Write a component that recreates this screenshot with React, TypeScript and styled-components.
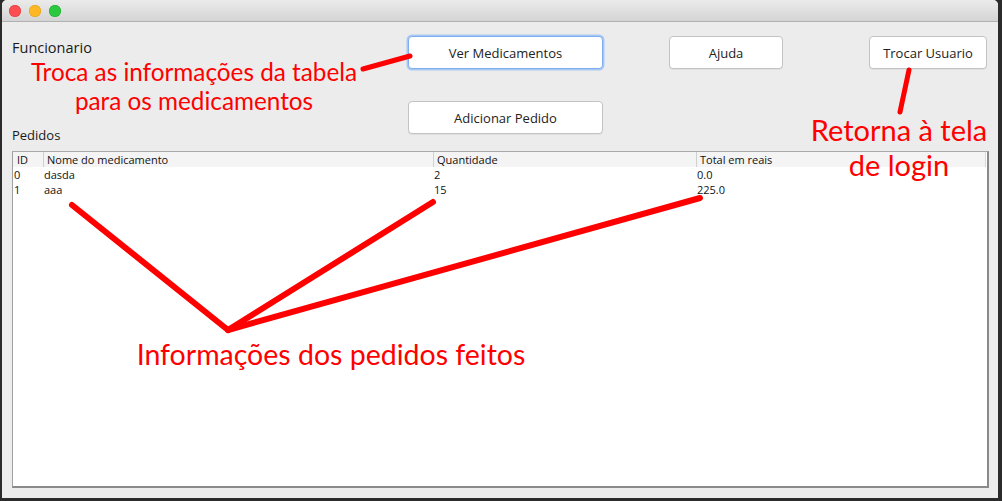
import React from "react";
import styled, { createGlobalStyle } from "styled-components";

const Global = createGlobalStyle`
  html, body { margin: 0; padding: 0; background: #2b2b2b; }
  body { font-family: "Open Sans", "Liberation Sans", sans-serif; }
`;

const Stage = styled.div`
  position: relative;
  width: 1002px;
  height: 501px;
  overflow: hidden;
  background: #2b2b2b;
  display: flex;
  padding-left: 2px;
  box-sizing: border-box;
`;

const Window = styled.div`
  width: 996px;
  height: 498px;
  background: #ececec;
  border-top-right-radius: 5px;
  border-top-left-radius: 5px;
  display: flex;
  flex-direction: column;
  overflow: hidden;
`;

const TitleBar = styled.div`
  height: 21px;
  flex: none;
  background: linear-gradient(#ebebeb, #d4d4d4);
  border-bottom: 1px solid #b1b1b1;
  display: flex;
  align-items: center;
  gap: 8px;
  padding-left: 7px;
`;

const Light = styled.span<{ $c: string; $b: string }>`
  width: 12px;
  height: 12px;
  border-radius: 50%;
  background: ${(p) => p.$c};
  box-shadow: inset 0 0 0 0.5px ${(p) => p.$b};
`;

const Content = styled.div`
  flex: 1;
  display: flex;
  flex-direction: column;
  padding: 14px 9px 10px 10px;
`;

const TopGrid = styled.div`
  display: grid;
  grid-template-columns: 396px 195px 66px 114px 86px 118px;
  grid-template-rows: 33px 32px 33px;
`;

const Label = styled.div<{ $size?: number }>`
  font-family: "Open Sans", "Liberation Sans", sans-serif;
  font-size: ${(p) => p.$size ?? 13}px;
  line-height: 17px;
  color: #1a1a1a;
`;

const TopLabel = styled(Label)`
  grid-column: 1;
  grid-row: 1;
  margin-top: 3px;
`;

const Button = styled.button<{ $col: number; $row: number; $focus?: boolean }>`
  grid-column: ${(p) => p.$col};
  grid-row: ${(p) => p.$row};
  margin: 0;
  padding: 0;
  background: #fff;
  border: 1px solid ${(p) => (p.$focus ? "#7eaef0" : "#c3c3c3")};
  box-shadow: ${(p) => (p.$focus ? "0 0 0 1.5px #a8c8f2" : "0 1px 0 rgba(0,0,0,0.05)")};
  border-radius: 4px;
  font-family: "Open Sans", "Liberation Sans", sans-serif;
  font-size: 13px;
  color: #222;
  cursor: default;
`;

const SectionLabel = styled(Label)`
  margin-top: -7px;
`;

const TableFrame = styled.div`
  margin-top: 7px;
  flex: 1;
  background: #fff;
  border-top: 1px solid #a9a9a9;
  border-left: 1px solid #a0a0a0;
  border-right: 2px solid #8a8a8a;
  border-bottom: 2px solid #8a8a8a;
  display: flex;
  flex-direction: column;
  font-family: "Open Sans", "Liberation Sans", sans-serif;
  font-size: 11px;
  color: #111;
`;

const COLS = "30px 390px 263px 1fr";

const HeaderRow = styled.div`
  display: grid;
  grid-template-columns: ${COLS};
  height: 15px;
  background: #f4f4f4;
  border-right: 1px solid #d8d8d8;
  margin-right: 1px;
`;

const HeaderCell = styled.div<{ $first?: boolean }>`
  padding-left: 3px;
  line-height: 15px;
  border-left: 1px solid ${(p) => (p.$first ? "transparent" : "#d0d0d0")};
  white-space: nowrap;
`;

const Row = styled.div`
  display: grid;
  grid-template-columns: ${COLS};
  height: 15px;
`;

const Cell = styled.div`
  padding-left: 1px;
  line-height: 15px;
  white-space: nowrap;
`;

const Overlay = styled.svg`
  position: absolute;
  inset: 0;
  pointer-events: none;
`;

const Note = styled.div<{ $cx: number; $y: number; $size: number; $lh: number }>`
  position: absolute;
  left: ${(p) => p.$cx}px;
  top: ${(p) => p.$y}px;
  transform: translateX(-50%);
  font-family: "Lato", "Liberation Sans", sans-serif;
  font-size: ${(p) => p.$size}px;
  line-height: ${(p) => p.$lh}px;
  color: #ff0000;
  text-align: center;
  white-space: nowrap;
`;

const rows = [
  ["0", "dasda", "2", "0.0"],
  ["1", "aaa", "15", "225.0"],
];

export default function App() {
  return (
    <Stage>
      <Global />
      <Window>
        <TitleBar>
          <Light $c="#fc4d50" $b="#df3d3f" />
          <Light $c="#fdb823" $b="#de9c19" />
          <Light $c="#2ac83e" $b="#1ea72e" />
        </TitleBar>
        <Content>
          <TopGrid>
            <TopLabel $size={14.5}>Funcionario</TopLabel>
            <Button $col={2} $row={1} $focus>
              Ver Medicamentos
            </Button>
            <Button $col={4} $row={1}>
              Ajuda
            </Button>
            <Button $col={6} $row={1}>
              Trocar Usuario
            </Button>
            <Button $col={2} $row={3}>
              Adicionar Pedido
            </Button>
          </TopGrid>
          <SectionLabel>Pedidos</SectionLabel>
          <TableFrame>
            <HeaderRow>
              <HeaderCell $first>ID</HeaderCell>
              <HeaderCell>Nome do medicamento</HeaderCell>
              <HeaderCell>Quantidade</HeaderCell>
              <HeaderCell>Total em reais</HeaderCell>
            </HeaderRow>
            {rows.map((r) => (
              <Row key={r[0]}>
                {r.map((c, i) => (
                  <Cell key={i}>{c}</Cell>
                ))}
              </Row>
            ))}
          </TableFrame>
        </Content>
      </Window>
      <Overlay width="1002" height="501" viewBox="0 0 1002 501">
        <g stroke="#ff0000" strokeLinecap="round" fill="none">
          <line x1="363" y1="69" x2="410" y2="56" strokeWidth="5" />
          <line x1="909" y1="70" x2="900" y2="112" strokeWidth="5" />
          <line x1="228" y1="330" x2="72" y2="205" strokeWidth="6" />
          <line x1="228" y1="330" x2="433" y2="202" strokeWidth="6" />
          <line x1="228" y1="330" x2="700" y2="198" strokeWidth="6" />
        </g>
      </Overlay>
      <Note $cx={194} $y={57} $size={24.3} $lh={29}>
        Troca as informações da tabela
        <br />
        para os medicamentos
      </Note>
      <Note $cx={899} $y={112} $size={29} $lh={35}>
        Retorna à tela
        <br />
        de login
      </Note>
      <Note $cx={331} $y={337} $size={28.5} $lh={35}>
        Informações dos pedidos feitos
      </Note>
    </Stage>
  );
}
